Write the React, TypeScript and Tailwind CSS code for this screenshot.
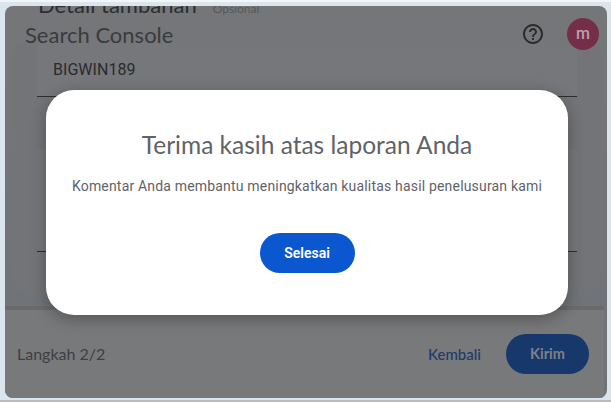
import React from "react";

export default function App() {
  return (
    <div className="relative h-[402px] w-[611px] overflow-hidden border-b-2 border-t-2 border-b-[#b9bbbd] border-t-[#f3f6f9] bg-[#dbe5ee] pb-[2px] pl-[5px] pr-[4px] pt-[4px] font-['Roboto',sans-serif]">
      <div className="relative flex h-[392px] flex-col overflow-hidden rounded-[8px] bg-gradient-to-b from-[#757678] to-[#6e7277]">
        <div className="relative flex-1 overflow-hidden">
          <div className="ml-[33px] mt-[-14px] flex h-[26px] items-baseline gap-[16px] font-['Lato',sans-serif] text-[22px] leading-[26px] text-[#2c2d30]">
            <span>Detail tambahan</span>
            <span className="text-[12px] text-[#57585b]">Opsional</span>
          </div>
          <div className="ml-[8px] mr-[6px] mt-[23px] flex h-[254px] flex-col rounded-[16px] bg-[#737477] px-[24px]">
            <div className="flex h-[56px] items-center border-b border-[#2e2e30] bg-[#76777a] px-[16px] pt-[2px] text-[16px] tracking-[0.05px] text-[#2a2b2d]">
              BIGWIN189
            </div>
            <div className="mt-[52px] h-[103px] border-b border-[#2e2e30] bg-[#76777a]" />
          </div>
        </div>
        <div className="mr-[3px] flex h-[92px] items-center justify-between border-t-[4px] border-[#6a6b6d] bg-[#78797b] pl-[12px] pr-[15px]">
          <span className="font-['Lato',sans-serif] text-[16px] text-[#3e3f41]">Langkah 2/2</span>
          <div className="flex items-center gap-[25px]">
            <span className="font-['Lato',sans-serif] text-[15px] font-medium text-[#1c3a70]">Kembali</span>
            <span className="flex h-[40px] w-[83px] items-center justify-center rounded-full bg-[#17386b] font-['Lato',sans-serif] text-[14.5px] font-bold text-[#7d8288]">
              Kirim
            </span>
          </div>
        </div>
        <div className="absolute left-0 right-0 top-0 flex h-[56px] items-center justify-between pl-[20px] pr-[8px]">
          <span className="font-['Lato',sans-serif] text-[22px] text-[#3a3b3e]">Search Console</span>
          <div className="flex items-center gap-[22px]">
            <svg width="24" height="24" viewBox="0 0 24 24" fill="#2a2b2d">
              <path d="M11 18h2v-2h-2v2zm1-16C6.48 2 2 6.48 2 12s4.48 10 10 10 10-4.48 10-10S17.52 2 12 2zm0 18c-4.41 0-8-3.59-8-8s3.59-8 8-8 8 3.59 8 8-3.59 8-8 8zm0-14c-2.21 0-4 1.79-4 4h2c0-1.1.9-2 2-2s2 .9 2 2c0 2-3 1.75-3 5h2c0-2.25 3-2.5 3-5 0-2.21-1.79-4-4-4z" />
            </svg>
            <span className="flex h-[32px] w-[32px] items-center justify-center rounded-full bg-[#752e47] text-[16px] font-medium text-[#b9a2ab]">
              m
            </span>
          </div>
        </div>
      </div>
      <div className="absolute left-[46px] top-[88px] flex h-[225px] w-[522px] flex-col items-center rounded-[28px] bg-white shadow-[0_4px_16px_rgba(0,0,0,0.3)]">
        <h1 className="mt-[39px] font-['Lato',sans-serif] text-[24.5px] leading-[32px] text-[#5f6368]">
          Terima kasih atas laporan Anda
        </h1>
        <p className="mt-[15px] text-[14px] leading-[20px] tracking-[0.18px] text-[#5f6368]">
          Komentar Anda membantu meningkatkan kualitas hasil penelusuran kami
        </p>
        <span className="mt-[37px] flex h-[40px] w-[95px] items-center justify-center rounded-full bg-[#0b57d0] text-[14px] font-semibold text-white">
          Selesai
        </span>
      </div>
    </div>
  );
}
